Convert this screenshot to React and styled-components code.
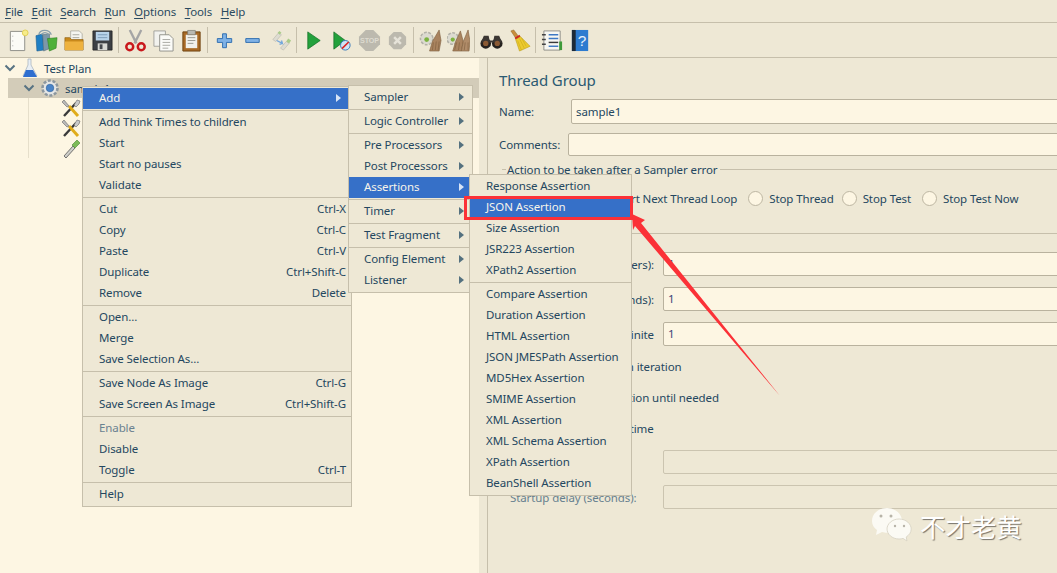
import React from 'react';
import styled, { createGlobalStyle } from 'styled-components';

const GlobalStyle = createGlobalStyle`
  html, body { margin: 0; padding: 0; background: #eee8d5; }
  * { box-sizing: border-box; }
`;

const FONT = `"Noto Sans", "Open Sans", sans-serif`;
const TEXT = '#24475f';
const LINE = '#c6bfab';

const Window = styled.div`
  position: relative;
  width: 1057px;
  height: 573px;
  overflow: hidden;
  background: #eee8d5;
  color: ${TEXT};
  font: 11.5px ${FONT};
  letter-spacing: -0.1px;
`;

const MenuBar = styled.div`
  display: flex;
  height: 23px;
  align-items: center;
  border-bottom: 1px solid ${LINE};
  padding-left: 5px;
  gap: 8.5px;
`;

const BarItem = styled.span`
  color: #2a4a60;
  u { text-underline-offset: 2px; }
`;

const Toolbar = styled.div`
  display: flex;
  height: 35px;
  align-items: center;
  padding-left: 4px;
  border-bottom: 1px solid ${LINE};
`;

const ToolButton = styled.div`
  width: 28px;
  height: 28px;
  display: flex;
  align-items: center;
  justify-content: center;
  opacity: ${(p) => (p.$dim ? 0.7 : 1)};
`;

const ToolSep = styled.div`
  width: 1px;
  height: 26px;
  margin: 0 2px;
  background: ${LINE};
`;

const Split = styled.div`
  display: flex;
  height: 515px;
`;

const TreePane = styled.div`
  width: 479px;
  flex: none;
  background: #fdf6e3;
`;

const TreeRow = styled.div`
  position: relative;
  display: flex;
  align-items: center;
  height: 20px;
  margin-left: ${(p) => (p.$selected ? 8 : 0)}px;
  padding-left: ${(p) => p.$indent}px;
  background: ${(p) => (p.$selected ? '#d3ccb9' : 'transparent')};
  gap: 5px;
`;

const Guide = styled.div`
  width: 1px;
  height: 20px;
  background: #e6dfcb;
  margin-right: 27px;
`;

const Divider = styled.div`
  width: 9px;
  flex: none;
  border-right: 1px solid ${LINE};
`;

const Panel = styled.div`
  width: 590px;
  flex: none;
  padding: 10px 0 0 11px;
`;

const Title = styled.div`
  height: 24px;
  line-height: 24px;
  font-size: 15px;
  color: #2b5a72;
  margin-bottom: 7px;
`;

const Row = styled.div`
  display: flex;
  align-items: center;
  margin-top: ${(p) => p.$top || 0}px;
`;

const Label = styled.label`
  flex: none;
  width: ${(p) => p.$width}px;
  color: ${(p) => (p.$muted ? '#66808f' : TEXT)};
  text-align: ${(p) => (p.$right ? 'right' : 'left')};
  padding-right: ${(p) => (p.$right ? 9 : 0)}px;
  padding-left: ${(p) => (p.$muted ? 11 : 0)}px;
  white-space: nowrap;
`;

const Input = styled.div`
  flex: 1;
  height: ${(p) => p.$h || 24}px;
  line-height: ${(p) => (p.$h || 24) - 2}px;
  padding-left: 4px;
  border: 1px solid #b9b29e;
  border-radius: 2px 0 0 2px;
  background: ${(p) => (p.$off ? 'transparent' : '#fdf6e3')};
  border-color: ${(p) => (p.$off ? '#cbc4b0' : '#b9b29e')};
  color: #3b3f78;
`;

const NameValue = styled.span`
  color: ${TEXT};
`;

const GroupHeading = styled.div`
  display: flex;
  align-items: center;
  height: 16px;
  margin: ${(p) => p.$top}px 0 0 3px;
  white-space: nowrap;
  &::before {
    content: '';
    width: 4px;
    height: 1px;
    margin-right: 1px;
    background: ${LINE};
  }
  &::after {
    content: '';
    flex: 1;
    height: 1px;
    margin-left: 2px;
    background: ${LINE};
  }
`;

const RadioRow = styled.div`
  display: flex;
  align-items: center;
  height: 20px;
  margin-top: 11px;
  padding-left: 11px;
  white-space: nowrap;
`;

const Radio = styled.span`
  width: 15px;
  height: 15px;
  flex: none;
  margin-left: ${(p) => p.$gap}px;
  margin-right: 6px;
  border: 1px solid #bdb6a2;
  border-radius: 50%;
  background: #fdf6e3;
`;

const CheckRow = styled.div`
  display: flex;
  align-items: center;
  gap: 6px;
  height: 20px;
  margin-top: ${(p) => p.$top}px;
  padding: 0 0 2px 15px;
  white-space: nowrap;
`;

const Check = styled.span`
  width: 13px;
  height: 13px;
  border: 1px solid #bdb6a2;
  background: #fdf6e3;
`;

const Menu = styled.div`
  position: absolute;
  left: ${(p) => p.$left}px;
  top: ${(p) => p.$top}px;
  width: ${(p) => p.$width}px;
  padding: 1px 0;
  background: #eee8d5;
  border: 1px solid ${LINE};
`;

const MenuItem = styled.div`
  display: flex;
  align-items: center;
  justify-content: space-between;
  height: 21px;
  padding: 0 ${(p) => p.$right}px 2px ${(p) => p.$left}px;
  background: ${(p) => (p.$active ? '#3670c8' : 'transparent')};
  color: ${(p) => (p.$active ? '#f6f4ea' : p.$disabled ? '#6a8190' : TEXT)};
  white-space: nowrap;
`;

const MenuSep = styled.div`
  height: 3px;
  display: flex;
  align-items: center;
  &::after {
    content: '';
    flex: 1;
    height: 1px;
    background: ${LINE};
  }
`;

const Caret = styled.span`
  width: 0;
  height: 0;
  margin-right: ${(p) => p.$inset}px;
  border-left: 5px solid ${(p) => (p.$active ? '#d8e4f6' : '#54717f')};
  border-top: 4.5px solid transparent;
  border-bottom: 4.5px solid transparent;
`;

const Annotation = styled.svg`
  position: absolute;
  left: 0;
  top: 0;
  pointer-events: none;
`;

const Watermark = styled.div`
  position: absolute;
  left: 871px;
  top: 506px;
  display: flex;
  align-items: center;
  gap: 7px;
  height: 38px;
  font: 25.5px "Noto Sans CJK SC", sans-serif;
  letter-spacing: 0;
  color: #fff;
  text-shadow: 1px 1px 1px #77736a;
`;

/* toolbar drawings */
const icons = {
  newFile: (
    <>
      <path d="M3.500 2.500h15v20h-15z" fill="#fbfbf6" stroke="#8d8d86" />
      <path d="M6 7v1M6 12v1M6 17v1" stroke="#aaa" />
      <circle cx="19" cy="4" r="3" fill="#f6ec8a" stroke="#e2cf55" />
    </>
  ),
  templates: (
    <>
      <path d="M1 7l7-2 1 17-7 1z" fill="#1f7fc4" stroke="#15578a" strokeWidth=".6" />
      <path d="M8 6l7-1 1 15-7 3z" fill="#7d97a8" stroke="#566c7a" strokeWidth=".6" />
      <path d="M13 10l10-1-1 11-7 3z" fill="#4fb03a" stroke="#2d7f20" strokeWidth=".6" />
      <path d="M4 6c1-6 11-6 13 0M7 6c1-3 6-3 7 0" fill="none" stroke="#8aa0ad" strokeWidth="1.400" />
    </>
  ),
  open: (
    <>
      <path d="M8 2h9l3 3v8H8z" fill="#f6f6f0" stroke="#9a9a90" strokeWidth=".7" />
      <path d="M10 6h7M10 9h7" stroke="#a8a8a0" />
      <path d="M2 9h5l2 2h12v11H2z" fill="#c98a1c" stroke="#8e5d0c" strokeWidth=".7" />
      <path d="M2 13h19v9H2z" fill="#eeb23f" />
    </>
  ),
  save: (
    <>
      <path d="M2 2h20v20H2z" fill="#3c3f44" stroke="#222" strokeWidth=".8" />
      <path d="M5 3h14v9H5z" fill="#b9d3ea" />
      <path d="M7 6h10M7 9h10" stroke="#7c9cb9" />
      <path d="M7 15h10v7H7z" fill="#d8d8d4" />
      <path d="M9 16h3v5H9z" fill="#44474c" />
    </>
  ),
  cut: (
    <>
      <path d="M6 1l7 14M18 1l-7 14" stroke="#a5a5a5" strokeWidth="2.400" />
      <circle cx="6" cy="18.500" r="3.600" fill="none" stroke="#c9181c" strokeWidth="2.600" />
      <circle cx="18" cy="18.500" r="3.600" fill="none" stroke="#c9181c" strokeWidth="2.600" />
    </>
  ),
  copy: (
    <>
      <path d="M2 2h12v16H2z" fill="#f2f2ee" stroke="#a3a39c" />
      <path d="M8 6h10l4 4v13H8z" fill="#fbfbf8" stroke="#92928b" />
      <path d="M11 11h8M11 14h8M11 17h8M11 20h6" stroke="#a8a8a2" />
    </>
  ),
  paste: (
    <>
      <path d="M3 3h18v20H3z" fill="#a86a26" stroke="#6e4312" />
      <path d="M6 6h12v14H6z" fill="#f1f1ec" />
      <path d="M8 1.500h8V6H8z" fill="#b9b9b2" stroke="#77776f" strokeWidth=".7" />
      <path d="M8 9h8M8 12h8M8 15h6" stroke="#9a9a92" />
    </>
  ),
  plus: (
    <path d="M10 5h4v5h5.500v4H14v5.500h-4V14H4.500v-4H10z" fill="#7fb2e6" stroke="#2f6eb0" />
  ),
  minus: <path d="M5 10h14v4H5z" fill="#7fb2e6" stroke="#2f6eb0" />,
  toggle: (
    <>
      <path d="M4 11l6-7 3 2-6 7z" fill="#d8d8d2" stroke="#a0a09a" strokeWidth=".6" />
      <path d="M9 4l2-2 2 2-2 2z" fill="#8ebf6a" />
      <path d="M12 20l6-7 3 2-6 7z" fill="#d8d8d2" stroke="#a0a09a" strokeWidth=".6" />
      <path d="M18 13l2-3 3 2-2 3z" fill="#8ebf6a" />
      <path d="M8 12l6 3-1-3 1 3-3 1" fill="none" stroke="#3e8be0" strokeWidth="1.400" />
    </>
  ),
  play: (
    <path d="M6 3l13 9-13 9z" fill="#23a13c" stroke="#0f6b22" strokeWidth=".7" />
  ),
  playNoPause: (
    <>
      <path d="M4 3l12 9-12 9z" fill="#23a13c" stroke="#0f6b22" strokeWidth=".7" />
      <circle cx="16" cy="17" r="5" fill="#cfe3f5" stroke="#3b79b8" />
      <path d="M12.500 20.500l7-7" stroke="#d22" strokeWidth="1.600" />
    </>
  ),
  stop: (
    <>
      <path d="M8 1h8l7 7v8l-7 7H8l-7-7V8z" fill="#bcb9ae" />
      <text x="12" y="15" fontSize="7.500" fontWeight="700" textAnchor="middle" fill="#dedbd0" fontFamily="Liberation Sans">STOP</text>
    </>
  ),
  shutdown: (
    <>
      <path d="M8 3h8l5 5v8l-5 5H8l-5-5V8z" fill="#bcb9ae" />
      <path d="M8.500 8.500l7 7M15.500 8.500l-7 7" stroke="#e6e3d9" strokeWidth="2.600" />
    </>
  ),
  clear: (
    <>
      <circle cx="8" cy="10" r="6.500" fill="#dcdad0" stroke="#b3b1a7" strokeDasharray="3 1.500" strokeWidth="1.600" />
      <circle cx="8" cy="11" r="2.500" fill="#7db340" />
      <path d="M21 1l-7 12-3 10h10l2-11z" fill="#a9835f" stroke="#7b5a3c" strokeWidth=".6" />
      <path d="M15 14l-1 8M18 13l-1 9M21 13l-1 9" stroke="#7b5a3c" strokeWidth=".6" />
    </>
  ),
  clearAll: (
    <>
      <circle cx="6" cy="10" r="6" fill="#dcdad0" stroke="#b3b1a7" strokeDasharray="3 1.500" strokeWidth="1.600" />
      <circle cx="6" cy="11" r="2.200" fill="#7db340" />
      <path d="M14 2l-5 11-3 10h9l2-10z" fill="#a9835f" stroke="#7b5a3c" strokeWidth=".6" />
      <path d="M22 1l-5 12-2 10h8l1-10z" fill="#b08c69" stroke="#7b5a3c" strokeWidth=".6" />
      <path d="M10 14l-2 8M13 14l-1 8M19 14l-1 8M22 14v8" stroke="#7b5a3c" strokeWidth=".6" />
    </>
  ),
  search: (
    <>
      <circle cx="6" cy="15" r="5.500" fill="#26221f" />
      <circle cx="18" cy="15" r="5.500" fill="#26221f" />
      <path d="M4 7h5l1 5h4l1-5h5l3 7H1z" fill="#3c3733" />
      <circle cx="6" cy="15" r="2.800" fill="#8b5a34" />
      <circle cx="18" cy="15" r="2.800" fill="#8b5a34" />
    </>
  ),
  broom: (
    <>
      <path d="M3 2l3-1 6 8-3 2z" fill="#c98d3c" stroke="#8a5c1c" strokeWidth=".5" />
      <path d="M7 9l5-3 1 2-5 3z" fill="#cf2222" />
      <path d="M8 11l5-3 10 10-11 5z" fill="#eccb2e" stroke="#b89a14" strokeWidth=".6" />
      <path d="M10 12l4 10M12 10l5 10M14 9l5 9" stroke="#c9a818" strokeWidth=".6" />
    </>
  ),
  tree: (
    <>
      <path d="M3 2h17v20H3z" fill="#f7f7f2" stroke="#8f8f88" />
      <path d="M1 6h4M1 11h4M1 16h4" stroke="#444" strokeWidth="1.500" />
      <path d="M8 6h10M8 10h10" stroke="#3d78c4" strokeWidth="1.500" />
      <path d="M8 14h10" stroke="#3a3a3a" strokeWidth="1.500" />
      <path d="M8 18h10" stroke="#3d78c4" strokeWidth="1.500" />
      <path d="M19 13h3v9h-3z" fill="#3f9a3a" />
    </>
  ),
  help: (
    <>
      <path d="M3 1h17v22H3z" fill="#2d7bd0" />
      <path d="M3 1h4v22H3z" fill="#1d2a38" />
      <text x="13.500" y="18" fontSize="16" textAnchor="middle" fill="#e7f1fb" fontFamily="Liberation Sans">?</text>
    </>
  ),
};

const ToolIcon = ({ name, dim }) => (
  <ToolButton $dim={dim}>
    <svg width="23" height="23" viewBox="0 0 24 24">{icons[name]}</svg>
  </ToolButton>
);

const TOOLS = [
  ['newFile', 'templates', 'open', 'save'],
  ['cut', 'copy', 'paste'],
  ['plus', 'minus', 'toggle'],
  ['play', 'playNoPause', 'stop', 'shutdown'],
  ['clear', 'clearAll'],
  ['search', 'broom'],
  ['tree', 'help'],
];

const Chevron = () => (
  <svg width="12" height="8" viewBox="0 0 12 8">
    <path d="M1.500 1.500L6 6l4.500-4.500" fill="none" stroke="#587383" strokeWidth="2" />
  </svg>
);

const Flask = () => (
  <svg width="18" height="20" viewBox="0 0 18 20">
    <path d="M7 1h3v6l6 11H2L7 7z" fill="#e8eef4" stroke="#aab6c2" strokeWidth=".8" />
    <path d="M5 12h7l4 7H2z" fill="#2f6fd0" />
  </svg>
);

const Gear = () => (
  <svg width="20" height="20" viewBox="0 0 20 20">
    <circle cx="10" cy="10" r="7.500" fill="#dfe1e2" stroke="#8c979f" strokeWidth="2.600" strokeDasharray="3 1.700" />
    <circle cx="10" cy="10" r="6" fill="#e6e7e6" />
    <circle cx="10" cy="10" r="3.800" fill="#4a84c8" stroke="#2e5f98" strokeWidth=".6" />
  </svg>
);

const Tools = () => (
  <svg width="20" height="20" viewBox="0 0 20 20">
    <path d="M3 18L15 5" stroke="#3a3a3a" strokeWidth="2.400" />
    <path d="M13 7l3-5 3 1-1 3-3 3z" fill="#c9c9c9" stroke="#666" strokeWidth=".6" />
    <path d="M17 18L8 8" stroke="#e0ac1c" strokeWidth="3" />
    <path d="M8 8L3 2 1 4l5 5z" fill="#b9b9b9" stroke="#666" strokeWidth=".6" />
  </svg>
);

const Dropper = () => (
  <svg width="20" height="20" viewBox="0 0 20 20">
    <path d="M3 18l9-10 2 2-9 10z" fill="#cfcfca" stroke="#555" strokeWidth=".8" />
    <path d="M11 7l5-5 3 3-5 5z" fill="#7dbb57" stroke="#4a8430" strokeWidth=".6" />
  </svg>
);

const WeChat = () => (
  <svg width="42" height="36" viewBox="0 0 42 36">
    <path d="M16 1C7 1 1 7 1 14c0 4 2 7 5 9l-1 5 6-3c2 .6 3 .7 5 .7 9 0 15-6 15-12S25 1 16 1z" fill="#fbfaf4" />
    <path d="M28 12c-7 0-12 5-12 10s5 10 12 10c1.500 0 3-.2 4-.6l4 2.600-.8-4c3-2 5-4.500 5-8 0-5-5-10-12-10z" fill="#fbfaf4" stroke="#d5d0c2" strokeWidth=".8" />
    <circle cx="10" cy="9" r="1.500" fill="#b8b4a8" />
    <circle cx="20" cy="9" r="1.500" fill="#b8b4a8" />
    <circle cx="24" cy="19" r="1.200" fill="#b8b4a8" />
    <circle cx="33" cy="19" r="1.200" fill="#b8b4a8" />
  </svg>
);

const MAIN_MENU = [
  [{ t: 'Add', sub: true, active: true }],
  [{ t: 'Add Think Times to children' }, { t: 'Start' }, { t: 'Start no pauses' }, { t: 'Validate' }],
  [{ t: 'Cut', k: 'Ctrl-X' }, { t: 'Copy', k: 'Ctrl-C' }, { t: 'Paste', k: 'Ctrl-V' }, { t: 'Duplicate', k: 'Ctrl+Shift-C' }, { t: 'Remove', k: 'Delete' }],
  [{ t: 'Open...' }, { t: 'Merge' }, { t: 'Save Selection As...' }],
  [{ t: 'Save Node As Image', k: 'Ctrl-G' }, { t: 'Save Screen As Image', k: 'Ctrl+Shift-G' }],
  [{ t: 'Enable', disabled: true }, { t: 'Disable' }, { t: 'Toggle', k: 'Ctrl-T' }],
  [{ t: 'Help' }],
];

const SUB_MENU = [
  [{ t: 'Sampler', sub: true }],
  [{ t: 'Logic Controller', sub: true }],
  [{ t: 'Pre Processors', sub: true }, { t: 'Post Processors', sub: true }, { t: 'Assertions', sub: true, active: true }],
  [{ t: 'Timer', sub: true }],
  [{ t: 'Test Fragment', sub: true }],
  [{ t: 'Config Element', sub: true }, { t: 'Listener', sub: true }],
];

const ASSERT_MENU = [
  [{ t: 'Response Assertion' }, { t: 'JSON Assertion', active: true }, { t: 'Size Assertion' }, { t: 'JSR223 Assertion' }, { t: 'XPath2 Assertion' }],
  [
    { t: 'Compare Assertion' }, { t: 'Duration Assertion' }, { t: 'HTML Assertion' }, { t: 'JSON JMESPath Assertion' },
    { t: 'MD5Hex Assertion' }, { t: 'SMIME Assertion' }, { t: 'XML Assertion' }, { t: 'XML Schema Assertion' },
    { t: 'XPath Assertion' }, { t: 'BeanShell Assertion' },
  ],
];

const PopupMenu = ({ groups, left, top, width, textLeft, textRight, caretInset = 0 }) => (
  <Menu $left={left} $top={top} $width={width}>
    {groups.map((group, i) => (
      <React.Fragment key={i}>
        {i > 0 && <MenuSep />}
        {group.map((item) => (
          <MenuItem key={item.t} $active={item.active} $disabled={item.disabled} $left={textLeft} $right={textRight}>
            <span>{item.t}</span>
            {item.k && <span>{item.k}</span>}
            {item.sub && <Caret $active={item.active} $inset={caretInset} />}
          </MenuItem>
        ))}
      </React.Fragment>
    ))}
  </Menu>
);

const BAR = [['F', 'ile'], ['E', 'dit'], ['S', 'earch'], ['R', 'un'], ['O', 'ptions'], ['T', 'ools'], ['H', 'elp']];

export default function App() {
  return (
    <Window>
      <GlobalStyle />
      <MenuBar>
        {BAR.map(([a, b]) => (
          <BarItem key={a}><u>{a}</u>{b}</BarItem>
        ))}
      </MenuBar>
      <Toolbar>
        {TOOLS.map((group, i) => (
          <React.Fragment key={i}>
            {i > 0 && <ToolSep />}
            {group.map((name) => (
              <ToolIcon key={name} name={name} dim={name === 'toggle'} />
            ))}
          </React.Fragment>
        ))}
      </Toolbar>
      <Split>
        <TreePane>
          <TreeRow $indent={4}>
            <Chevron />
            <Flask />
            <span>Test Plan</span>
          </TreeRow>
          <TreeRow $selected $indent={15}>
            <Chevron />
            <Gear />
            <span>sample1</span>
          </TreeRow>
          {[Tools, Tools, Dropper].map((Icon, i) => (
            <TreeRow key={i} $indent={28}>
              <Guide />
              <Icon />
            </TreeRow>
          ))}
        </TreePane>
        <Divider />
        <Panel>
          <Title>Thread Group</Title>
          <Row>
            <Label $width={72}>Name:</Label>
            <Input $h={25}><NameValue>sample1</NameValue></Input>
          </Row>
          <Row $top={9}>
            <Label $width={69}>Comments:</Label>
            <Input $h={23} />
          </Row>
          <GroupHeading $top={5}>Action to be taken after a Sampler error</GroupHeading>
          <RadioRow>
            <Radio $gap={0} />Continue
            <Radio $gap={14} />Start Next Thread Loop
            <Radio $gap={11} />Stop Thread
            <Radio $gap={8} />Stop Test
            <Radio $gap={11} />Stop Test Now
          </RadioRow>
          <GroupHeading $top={17}>Thread Properties</GroupHeading>
          <Row $top={11}>
            <Label $width={164} $right>Number of Threads (users):</Label>
            <Input>1</Input>
          </Row>
          <Row $top={11}>
            <Label $width={164} $right>Ramp-up period (seconds):</Label>
            <Input>1</Input>
          </Row>
          <Row $top={11}>
            <Label $width={164} $right>Loop Count: Infinite</Label>
            <Input>1</Input>
          </Row>
          <CheckRow $top={11}><Check />Same user on each iteration</CheckRow>
          <CheckRow $top={11}><Check />Delay Thread creation until needed</CheckRow>
          <CheckRow $top={11}><Check />Specify Thread lifetime</CheckRow>
          <Row $top={11}>
            <Label $width={164} $muted>Duration (seconds):</Label>
            <Input $off />
          </Row>
          <Row $top={11}>
            <Label $width={164} $muted>Startup delay (seconds):</Label>
            <Input $off />
          </Row>
        </Panel>
      </Split>
      <PopupMenu groups={MAIN_MENU} left={82} top={86} width={270} textLeft={16} textRight={5} caretInset={5} />
      <PopupMenu groups={SUB_MENU} left={348} top={85} width={125} textLeft={15} textRight={8} />
      <PopupMenu groups={ASSERT_MENU} left={469} top={174} width={163} textLeft={16} textRight={5} />
      <Annotation width="1057" height="573" viewBox="0 0 1057 573">
        <rect x="465.500" y="197.500" width="166" height="21" fill="none" stroke="#fb3137" strokeWidth="3" />
        <path d="M632 214l13 6-4 3 139 173-145-170-2 4z" fill="#fb3137" />
      </Annotation>
      <Watermark>
        <WeChat />
        <span>不才老黄</span>
      </Watermark>
    </Window>
  );
}
